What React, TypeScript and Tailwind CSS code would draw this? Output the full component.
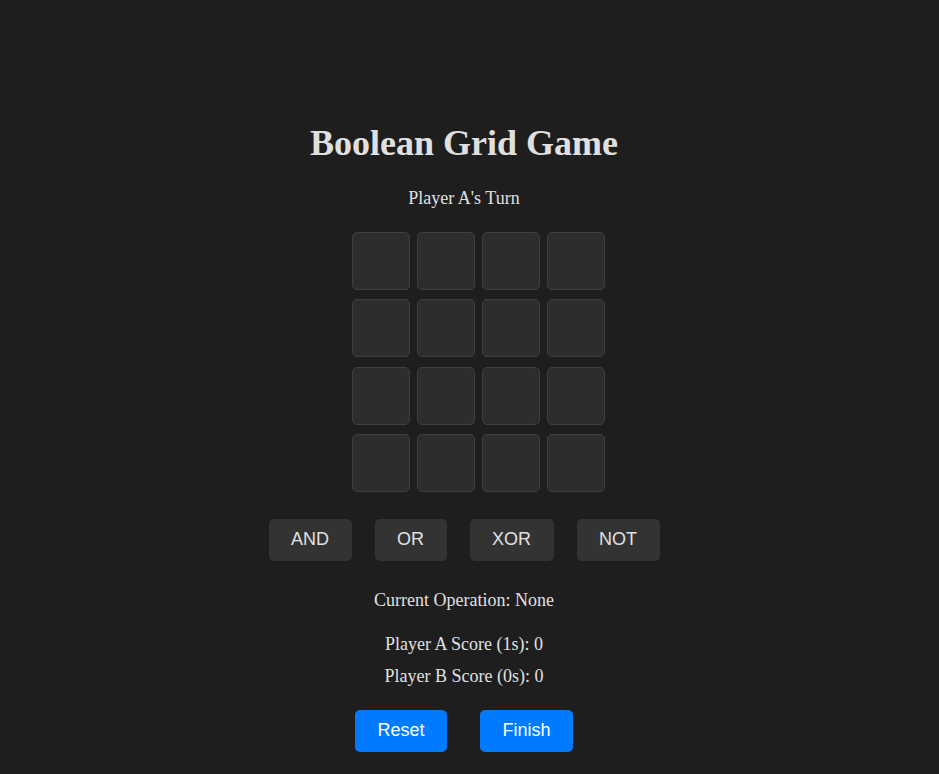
import { useState } from "react";

const ops = [
  { id: "AND", w: "w-[83px]" },
  { id: "OR", w: "w-[72px]" },
  { id: "XOR", w: "w-[84px]" },
  { id: "NOT", w: "w-[83px]" },
];

export default function App() {
  const [grid] = useState<(number | null)[]>(Array(16).fill(null));
  const [op, setOp] = useState<string | null>(null);

  return (
    <div className="min-h-[774px] w-full bg-[#1e1e1e] text-[#e0e0e0] font-['Liberation_Serif',serif]">
      <div className="flex w-[928px] flex-col items-center pt-[123px]">
        <h1 className="text-[36px] font-bold leading-[41px]">Boolean Grid Game</h1>
        <p className="mt-[24px] text-[18px] leading-[21px]">Player A's Turn</p>

        {/* board */}
        <div className="ml-[29px] mt-[23px] grid grid-cols-4 gap-x-[7.3px] gap-y-[9.34px]">
          {grid.map((cell, i) => (
            <div
              key={i}
              className="h-[58px] w-[58px] rounded-[5px] border border-[#3f3f3f] bg-[#2d2d2d]"
            >
              {cell}
            </div>
          ))}
        </div>

        {/* operations */}
        <div className="mt-[27px] flex gap-[23px] font-['Liberation_Sans',Arial,sans-serif]">
          {ops.map((o) => (
            <button
              key={o.id}
              onClick={() => setOp(o.id)}
              className={`${o.w} h-[42px] rounded-[5px] bg-[#333333] text-[18px] text-[#e0e0e0]`}
            >
              {o.id}
            </button>
          ))}
        </div>

        <p className="mt-[29px] text-[18px] leading-[21px]">Current Operation: {op ?? "None"}</p>
        <p className="mt-[23px] text-[18px] leading-[21px]">Player A Score (1s): 0</p>
        <p className="mt-[11px] text-[18px] leading-[21px]">Player B Score (0s): 0</p>

        <div className="mt-[23px] flex gap-[33px] font-['Liberation_Sans',Arial,sans-serif]">
          <button className="h-[42px] w-[92px] rounded-[5px] bg-[#007bff] text-[18px] text-white">Reset</button>
          <button className="h-[42px] w-[93px] rounded-[5px] bg-[#007bff] text-[18px] text-white">Finish</button>
        </div>
      </div>
    </div>
  );
}
